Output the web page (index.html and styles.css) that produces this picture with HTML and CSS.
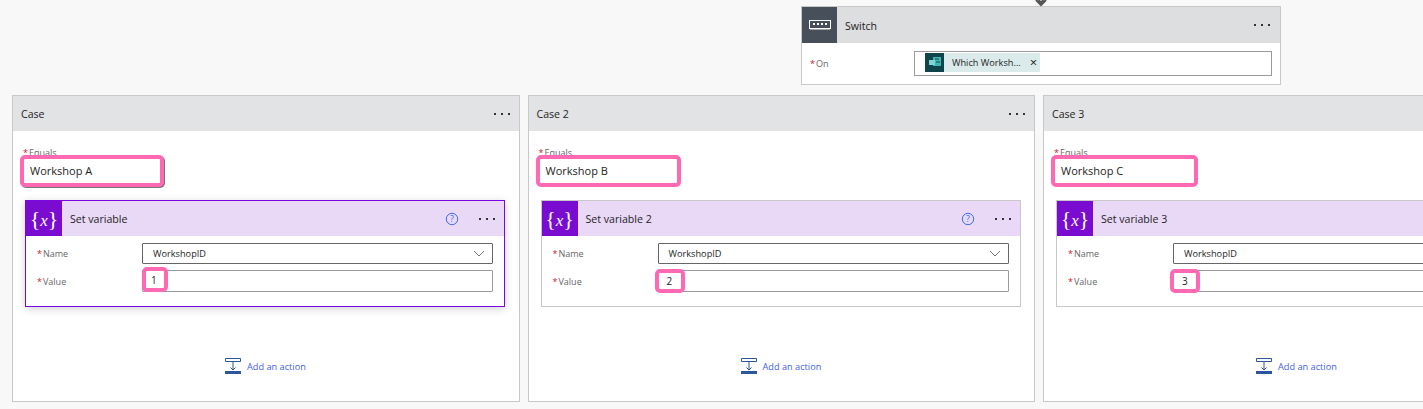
FILE: index.html
```html
<!DOCTYPE html>
<html lang="en">
<head>
<meta charset="utf-8">
<title>Switch flow</title>
<link rel="stylesheet" href="styles.css">
</head>
<body>
<div class="top">
  <div class="switch">
    <svg class="arrow" width="14" height="7" viewBox="0 0 14 7"><path d="M2 0l5 5 5-5M4.500 0L7 2.500 9.500 0" fill="none" stroke="#555" stroke-width="2"/></svg>
    <div class="head head-switch">
      <div class="ico ico-switch">
        <svg width="22" height="10" viewBox="0 0 22 10"><rect x=".5" y=".5" width="21" height="8" fill="none" stroke="#fff"/><rect x="1" y="8" width="20" height="1.500" fill="#fff"/><path d="M4 3h2v2H4zM8 3h2v2H8zM12 3h2v2h-2zM16 3h2v2h-2z" fill="#fff"/></svg>
      </div>
      <span class="title title-switch">Switch</span>
      <span class="dots"><i></i><i></i><i></i></span>
    </div>
    <div class="on-row">
      <label class="lbl lbl-on"><b>*</b>On</label>
      <div class="on-input">
        <span class="token">
          <span class="token-ico"><svg width="12" height="10" viewBox="0 0 12 10"><rect x="4" y="0" width="8" height="9" fill="#3fb6b2"/><rect x="0" y="3" width="6" height="5" fill="#7fd6d2"/><path d="M6 2h4M7 5h4" stroke="#0d4a4c"/></svg></span>
          <span class="token-text">Which Worksh...</span>
          <span class="token-x">×</span>
        </span>
      </div>
    </div>
  </div>
</div>

<div class="cases">
  <section class="case">
    <div class="head head-case"><span class="title">Case</span><span class="dots"><i></i><i></i><i></i></span></div>
    <div class="case-body">
      <div class="lbl lbl-eq"><b>*</b>Equals</div>
      <div class="hl hl-eq hl-dark">Workshop A</div>
      <div class="action action-selected">
        <div class="head head-var">
          <div class="ico ico-var"><span class="x">{<em>x</em>}</span></div>
          <span class="title">Set variable</span>
          <svg class="help" width="14" height="14" viewBox="0 0 14 14"><circle cx="7" cy="7" r="5.700" fill="none" stroke="#3f6fe8"/><text x="7" y="10" text-anchor="middle" class="help-q">?</text></svg>
          <span class="dots"><i></i><i></i><i></i></span>
        </div>
        <div class="rows">
          <div class="row"><span class="lbl"><b>*</b>Name</span><div class="select">WorkshopID<svg width="12" height="7" viewBox="0 0 12 7"><path d="M1 1l5 5 5-5" fill="none" stroke="#777"/></svg></div></div>
          <div class="row row-value"><span class="lbl"><b>*</b>Value</span><div class="value"><span class="hl hl-val">1</span></div></div>
        </div>
      </div>
      <div class="add"><svg width="17" height="16" viewBox="0 0 17 16"><path d="M.5.500h15v3H.500z" fill="none" stroke="#2b579a"/><path d="M8 4v8M5.500 9.500L8 12l2.500-2.500" fill="none" stroke="#2b579a"/><rect y="13" width="16" height="3" fill="#2b579a"/></svg><span>Add an action</span></div>
    </div>
  </section>

  <section class="case">
    <div class="head head-case"><span class="title">Case 2</span><span class="dots"><i></i><i></i><i></i></span></div>
    <div class="case-body">
      <div class="lbl lbl-eq"><b>*</b>Equals</div>
      <div class="hl hl-eq hl-eq-b">Workshop B</div>
      <div class="action">
        <div class="head head-var">
          <div class="ico ico-var"><span class="x">{<em>x</em>}</span></div>
          <span class="title">Set variable 2</span>
          <svg class="help" width="14" height="14" viewBox="0 0 14 14"><circle cx="7" cy="7" r="5.700" fill="none" stroke="#3f6fe8"/><text x="7" y="10" text-anchor="middle" class="help-q">?</text></svg>
          <span class="dots"><i></i><i></i><i></i></span>
        </div>
        <div class="rows">
          <div class="row"><span class="lbl"><b>*</b>Name</span><div class="select">WorkshopID<svg width="12" height="7" viewBox="0 0 12 7"><path d="M1 1l5 5 5-5" fill="none" stroke="#777"/></svg></div></div>
          <div class="row row-value"><span class="lbl"><b>*</b>Value</span><div class="value"><span class="hl hl-val hl-val-wide">2</span></div></div>
        </div>
      </div>
      <div class="add"><svg width="17" height="16" viewBox="0 0 17 16"><path d="M.5.500h15v3H.500z" fill="none" stroke="#2b579a"/><path d="M8 4v8M5.500 9.500L8 12l2.500-2.500" fill="none" stroke="#2b579a"/><rect y="13" width="16" height="3" fill="#2b579a"/></svg><span>Add an action</span></div>
    </div>
  </section>

  <section class="case">
    <div class="head head-case"><span class="title">Case 3</span><span class="dots"><i></i><i></i><i></i></span></div>
    <div class="case-body">
      <div class="lbl lbl-eq"><b>*</b>Equals</div>
      <div class="hl hl-eq hl-eq-c">Workshop C</div>
      <div class="action">
        <div class="head head-var">
          <div class="ico ico-var"><span class="x">{<em>x</em>}</span></div>
          <span class="title">Set variable 3</span>
          <svg class="help" width="14" height="14" viewBox="0 0 14 14"><circle cx="7" cy="7" r="5.700" fill="none" stroke="#3f6fe8"/><text x="7" y="10" text-anchor="middle" class="help-q">?</text></svg>
          <span class="dots"><i></i><i></i><i></i></span>
        </div>
        <div class="rows">
          <div class="row"><span class="lbl"><b>*</b>Name</span><div class="select">WorkshopID<svg width="12" height="7" viewBox="0 0 12 7"><path d="M1 1l5 5 5-5" fill="none" stroke="#777"/></svg></div></div>
          <div class="row row-value"><span class="lbl"><b>*</b>Value</span><div class="value"><span class="hl hl-val hl-val-wide">3</span></div></div>
        </div>
      </div>
      <div class="add"><svg width="17" height="16" viewBox="0 0 17 16"><path d="M.5.500h15v3H.500z" fill="none" stroke="#2b579a"/><path d="M8 4v8M5.500 9.500L8 12l2.500-2.500" fill="none" stroke="#2b579a"/><rect y="13" width="16" height="3" fill="#2b579a"/></svg><span>Add an action</span></div>
    </div>
  </section>
</div>
</body>
</html>
```

FILE: styles.css
```css
* { box-sizing: border-box; }
html, body { margin: 0; height: 409px; overflow: hidden; }
body {
  background: #f8f8f8;
  font-family: "Open Sans", "Noto Sans", "Liberation Sans", sans-serif;
  font-size: 11px;
  color: #1d1d1d;
}
.top { padding: 6px 0 0 801px; height: 95px; }
.switch {
  position: relative;
  width: 480px;
  height: 79px;
  background: #fff;
  border: 1px solid #c8c8c8;
}
.arrow { position: absolute; left: 232px; top: -7px; }
.head { display: flex; align-items: center; height: 35px; }
.head-switch { height: 36px; background: #dcdee0; }
.head-case { background: #e2e3e5; padding-left: 8px; }
.head-var { height: 35px; background: #e9d9f7; }
.ico { width: 35px; height: 100%; display: flex; align-items: center; justify-content: center; flex: none; }
.ico-switch { background: #474f5b; }
.ico-var { width: 36px; background: #7a0bd0; color: #fff; }
.x { font-family: "Liberation Serif", serif; font-size: 22px; font-weight: 400; line-height: 1; }
.x em { font-size: 17px; }
.title { font-size: 10.600px; color: #1d1d1d; white-space: nowrap; }
.title-switch { margin-left: 8px; padding-top: 2px; }
.head-var .title { margin-left: 8px; }
.dots { margin-left: auto; display: flex; gap: 5px; margin-right: 9px; }
.head-switch .dots { margin-right: 10px; }
.dots i { width: 2px; height: 2px; background: #333; display: block; }
.help { margin-left: auto; margin-right: 20px; flex: none; }
.help + .dots { margin-left: 0; }
.help-q { font-size: 9px; fill: #3f6fe8; font-family: "Open Sans", sans-serif; }

.on-row { display: flex; align-items: center; height: 40px; padding: 0 8px; }
.lbl { font-size: 9px; color: #666; white-space: nowrap; }
.lbl b { color: #d0142c; font-weight: 400; margin-right: 1px; }
.lbl-on { width: 104px; }
.on-input {
  width: 358px;
  height: 25px;
  border: 1px solid #9b9b9b;
  padding: 1px 10px;
  display: flex;
  align-items: stretch;
}
.token { display: flex; align-items: center; background: #dbeaeb; font-size: 9.200px; color: #1d1d1d; height: 19px; }
.token-ico { width: 19px; height: 19px; background: #0e444a; display: flex; align-items: center; justify-content: center; }
.token-text { margin-left: 8px; }
.token-x { margin: 0 3px 0 9px; font-size: 13px; line-height: 1; }

.cases { display: flex; gap: 8px; padding-left: 12px; }
.case {
  flex: none;
  width: 507.500px;
  height: 307px;
  background: #fff;
  border: 1px solid #c8c8c8;
  display: flex;
  flex-direction: column;
}
.case-body { position: relative; flex: 1; padding: 16px 12px 0; }
.lbl-eq { height: 8px; line-height: 12px; margin-left: -2px; }
.hl {
  display: block;
  border: 4px solid #ff69b4;
  border-radius: 5px;
  background: #fff;
}
.hl-eq {
  position: relative;
  width: 144px;
  height: 32px;
  margin-left: -5px;
  padding: 0 0 1px 6px;
  line-height: 23px;
  font-size: 11px;
}
.hl-eq-b { width: 145px; }
.hl-eq-c { width: 147px; }
.hl-dark { box-shadow: 1px 1px 0 #777; }
.action {
  width: 480px;
  height: 107px;
  margin-top: 13px;
  background: #fff;
  border: 1px solid #c8c8c8;
}
.action-selected { border-color: #7a06e0; box-shadow: 0 2px 8px rgba(0, 0, 0, .18); }
.rows { padding: 7px 11px 0 0; }
.row { display: flex; align-items: center; height: 21px; padding-left: 11px; }
.row .lbl { width: 105px; flex: none; }
.row-value { height: 22px; margin-top: 6px; }
.select, .value {
  flex: 1;
  height: 100%;
  display: flex;
  align-items: center;
  justify-content: space-between;
  border: 1px solid #666;
  padding: 0 7px 0 10px;
  font-size: 9.200px;
  border-radius: 1px;
}
.value { border-color: #9b9b9b; padding: 0; position: relative; }
.hl-val {
  position: absolute;
  left: -1px;
  top: -4px;
  width: 26px;
  height: 25px;
  padding-left: 5px;
  line-height: 19px;
  font-size: 10px;
}
.hl-val-wide {
  left: -4px;
  top: -2px;
  width: 30px;
  height: 24px;
  padding-left: 8px;
  line-height: 17px;
}
.add {
  position: absolute;
  left: 212px;
  top: 227px;
  display: flex;
  align-items: center;
  gap: 5px;
  color: #3f5fe0;
  font-size: 9.200px;
}
```
